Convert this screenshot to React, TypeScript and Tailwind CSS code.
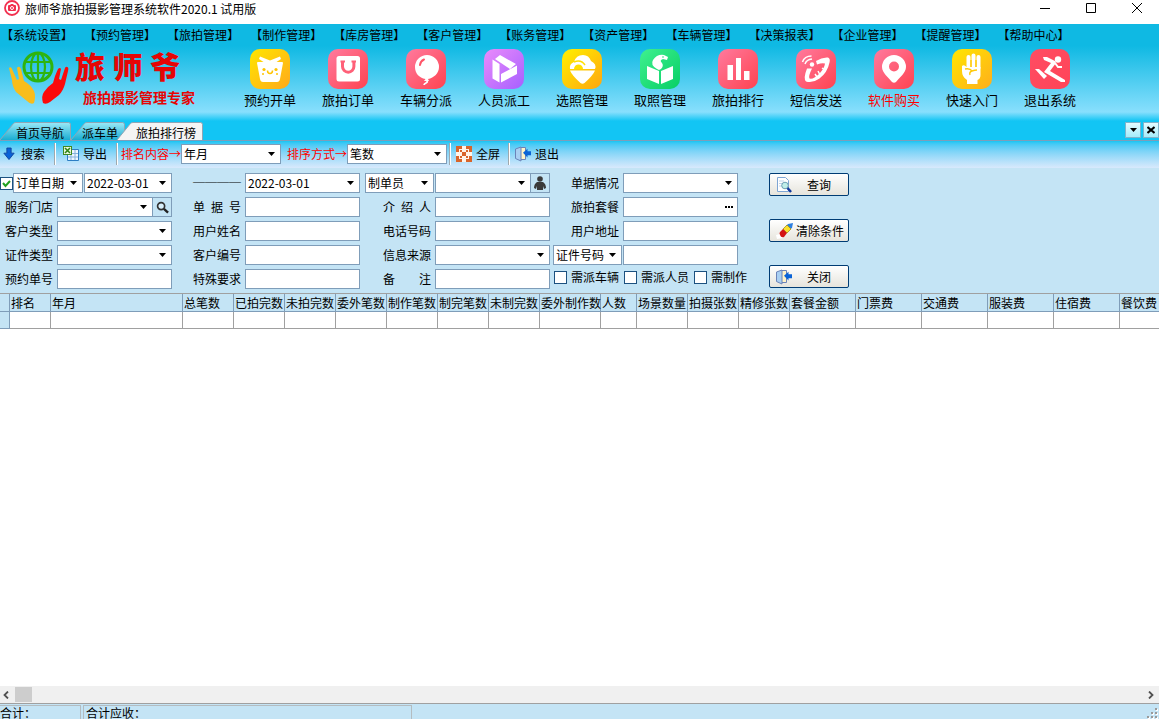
import type { ReactNode } from 'react'

const menus = [
  '系统设置', '预约管理', '旅拍管理', '制作管理', '库房管理', '客户管理', '账务管理',
  '资产管理', '车辆管理', '决策报表', '企业管理', '提醒管理', '帮助中心',
]

type Shortcut = { label: string; from: string; to: string; red?: boolean; art: ReactNode }

const shortcuts: Shortcut[] = [
  {
    label: '预约开单', from: '#ffe600', to: '#ffa91c',
    art: (
      <>
        <path d="M7 14q0-1 1-1h24q1 0 1 1l-3 16q-.5 3-3 3H13q-2.500 0-3-3z" />
        <path d="M10 7.500l10 4 10-4 1 2.500-6 4H15l-6-4z" />
        <g fill="#ffc400">
          <circle cx="14" cy="20.500" r="1.600" />
          <circle cx="26" cy="20.500" r="1.600" />
          <circle cx="13" cy="25" r="1" />
          <circle cx="27" cy="25" r="1" />
        </g>
        <path d="M17.500 21.500q0 3 2.500 3t2.500-3" fill="none" stroke="#ffc400" strokeWidth="1.500" />
      </>
    ),
  },
  {
    label: '旅拍订单', from: '#ff7a9e', to: '#ff4350',
    art: (
      <>
        <rect x="8.500" y="7" width="23.500" height="25.500" rx="2.500" />
        <path d="M14.500 12v5.500a5.700 5.700 0 0 0 11.400 0V12" fill="none" stroke="#ff6078" strokeWidth="3" />
        <path d="M12.500 12.500h4.500M23.500 12.500H28" stroke="#ff6078" strokeWidth="2" />
      </>
    ),
  },
  {
    label: '车辆分派', from: '#ff7a9e', to: '#ff4350',
    art: (
      <>
        <path d="M21 6a12 12 0 0 1 12 12c0 6-5 11-11 12l1 2h-5l1.500-2C13 29 9 24 9 18A12 12 0 0 1 21 6z" />
        <path d="M21 31q1 2-1 3t-2 2" fill="none" stroke="#fff" strokeWidth="1.600" />
        <path d="M14 16q.5-4 4-5.500" fill="none" stroke="#ff5568" strokeWidth="2" strokeLinecap="round" />
      </>
    ),
  },
  {
    label: '人员派工', from: '#ea8bfb', to: '#a660ff',
    art: <path d="M16 6l16 9-6 5L11 10zM8.500 10.500l7 4.500v18.500l-7-4zM17 25l16-8.500V25l-16 8.500z" />,
  },
  {
    label: '选照管理', from: '#fff000', to: '#ffa60f',
    art: (
      <>
        <path d="M8 20q-1-5 4-7 2-7 9-7 6 0 8 6 6 3 4 8z" />
        <path d="M8 21.500h25q-2 5-10.500 12.500-2 1.500-4 0Q10 26.500 8 21.500z" />
        <path d="M12 20a4.500 4.500 0 0 1 9 0z" fill="#ffdf00" />
        <path d="M12 13q7-3 11 3" fill="none" stroke="#ffdf00" strokeWidth="1.500" />
      </>
    ),
  },
  {
    label: '取照管理', from: '#3ff08f', to: '#08cf66',
    art: (
      <>
        <path d="M7 17l12 5v13L7 30zM33 17l-12 5v13l12-5z" />
        <path d="M17 20q-7-4-4-9 4-6 11-5l4 2-1 3-4-1q-4 1-1 4 2 3-1 6l-2 1z" />
        <circle cx="23" cy="8" r=".8" fill="#1edb78" />
      </>
    ),
  },
  {
    label: '旅拍排行', from: '#ff7a9e', to: '#ff4350',
    art: <path d="M9.500 16H15v15H9.500zM18 9h5v22h-5zM26 22h5.500v9H26z" />,
  },
  {
    label: '短信发送', from: '#ff7a9e', to: '#ff4350',
    art: (
      <>
        <path d="M6.500 13q2-6 9-6M9 15q1.500-4.500 7-5" fill="none" stroke="#fff" strokeWidth="1.500" />
        <circle cx="16" cy="15.500" r="2.200" />
        <path d="M20 12q6-4 12-3.500 2.500 1 1.500 5-2 10-10 16-7 5-13.500 3-3-3 1-13l5 0q-4 8-2.500 10 4 1 9-4 6-6 6.500-11-3-1-8 1z" />
        <path d="M22 22l2 4M26 19l3 2M19 25l2 3" stroke="#fff" strokeWidth="1.500" />
      </>
    ),
  },
  {
    label: '软件购买', from: '#ff7a9e', to: '#ff4350', red: true,
    art: (
      <path
        fillRule="evenodd"
        d="M20 6a12 12 0 0 1 12 12c0 6-7 11-10 15q-2 1.500-4 0C15 29 8 24 8 18A12 12 0 0 1 20 6zm0 6.500a5 5 0 1 0 0 10 5 5 0 0 0 0-10z"
      />
    ),
  },
  {
    label: '快速入门', from: '#ffe600', to: '#ffae1c',
    art: (
      <>
        <path d="M16.500 19V8M21.500 18V6.500M26.500 19V8" stroke="#fff" strokeWidth="4" strokeLinecap="round" />
        <path d="M10 17q2-2 4.500 1h14v8q0 4-3 5v4H15v-4q-5-3-5-9z" />
        <path d="M13 20q5-1 7 2 3-1 5-1M20 22q-3 1-2 4M19 11v7M24 11v7" fill="none" stroke="#ffca0a" strokeWidth="1.400" />
      </>
    ),
  },
  {
    label: '退出系统', from: '#ff4d63', to: '#ff4458',
    art: (
      <>
        <circle cx="28" cy="10.500" r="3.200" />
        <path d="M13 8h4l8 4 1 2-6 8 15 9v2h-4L14 23l7-9-7-3z" />
        <path d="M25 14l3 4h4" fill="none" stroke="#fff" strokeWidth="2" />
        <path d="M5 20h4l8 7-3 3z" />
      </>
    ),
  },
]

const columns: [string, number][] = [
  ['排名', 41], ['年月', 132], ['总笔数', 51], ['已拍完数', 51], ['未拍完数', 51], ['委外笔数', 51],
  ['制作笔数', 51], ['制完笔数', 51], ['未制完数', 51], ['委外制作数', 61], ['人数', 36],
  ['场景数量', 51], ['拍摄张数', 51], ['精修张数', 51], ['套餐金额', 66], ['门票费', 66],
  ['交通费', 66], ['服装费', 66], ['住宿费', 66], ['餐饮费', 66],
]

function AppTile({ from, to, id, children }: { from: string; to: string; id: string; children: ReactNode }) {
  return (
    <svg viewBox="0 0 40 40" className="size-10" fill="#fff" aria-hidden="true">
      <defs>
        <linearGradient id={id} x1="0" y1="0" x2="1" y2="1">
          <stop offset="0" stopColor={from} />
          <stop offset="1" stopColor={to} />
        </linearGradient>
      </defs>
      <rect width="40" height="40" rx="10" fill={`url(#${id})`} />
      {children}
    </svg>
  )
}

function Logo() {
  return (
    <svg viewBox="0 0 60 56" className="h-14 w-[60px] shrink-0" fill="none" aria-hidden="true">
      <g stroke="#2fb40f" strokeWidth="2.200">
        <circle cx="29" cy="18" r="14" strokeWidth="3" />
        <ellipse cx="29" cy="18" rx="7" ry="14" />
        <path d="M29 4v28M16 13h26M16 24h26" />
      </g>
      <path
        d="M0 19Q2 17 3 20L8 31L10 30L8 19Q10 16 12 20L15 32Q22 36 25 42Q27 47 25 54Q22 56 18 52L7 43Q3 37 3 31Z"
        fill="#f8bd1c"
      />
      <path
        d="M58 18Q60 18 59 22L56 35Q54 42 50 46L41 53Q37 56 34 54Q32 47 35 43Q38 38 44 34Q46 26 49 20Q51 18 52 20L50 30L52 31L56 19Q57 17 58 18Z"
        fill="#fb0a0a"
      />
    </svg>
  )
}

function DownArrow() {
  return (
    <svg viewBox="0 0 14 16" className="h-4 w-3" aria-hidden="true">
      <path d="M4.500 1h5v6H13l-6 7.500L1 7h3.500z" fill="#0a62d8" stroke="#0b3f99" />
    </svg>
  )
}

function ExportIcon() {
  return (
    <svg viewBox="0 0 16 16" className="size-4" aria-hidden="true">
      <path d="M4.500 3.500h11v11h-11z" fill="#eef6ff" stroke="#2d7dc4" />
      <path d="M8 4v10M12 4v10M5 7.500h10M5 11h10" stroke="#86b3dc" />
      <rect x=".5" y=".5" width="8" height="8" fill="#e9f7dc" stroke="#3f8a21" />
      <path d="M2 2l5 5M7 2L2 7" stroke="#2f8415" strokeWidth="1.600" />
    </svg>
  )
}

function FullscreenIcon() {
  return (
    <svg viewBox="0 0 16 16" className="size-4" aria-hidden="true">
      <rect width="16" height="16" rx="1" fill="#fff4ea" />
      <path
        d="M0 0h6v3H3v3H0zM10 0h6v6h-3V3h-3zM0 10h3v3h3v3H0zM13 10h3v6h-6v-3h3zM6 6h4v4H6zM4 4h2v2H4zM10 4h2v2h-2zM4 10h2v2H4zM10 10h2v2h-2z"
        fill="#d9642a"
      />
    </svg>
  )
}

function DoorIcon() {
  return (
    <svg viewBox="0 0 16 16" className="size-4 shrink-0" aria-hidden="true">
      <path d="M4.500 1.500h6v12h-6z" fill="#fff3c9" stroke="#6b83b8" />
      <path d="M.5 3L6 1v14L.5 12.500z" fill="#a9cff2" stroke="#6b83b8" />
      <path d="M8 6.800l4.500-4v2.400H16v4h-3.500v2.400z" fill="#0a63d6" />
    </svg>
  )
}

function QueryIcon() {
  return (
    <svg viewBox="0 0 16 16" className="size-4 shrink-0" aria-hidden="true">
      <path d="M1.500.5h8l3 3v11h-11z" fill="#fff" stroke="#7fa6d4" />
      <path d="M3 4h5M3 6.500h4M3 9h3" stroke="#c0d4ea" />
      <circle cx="9" cy="8.500" r="3.300" fill="#bfeee8" stroke="#6d9fb4" />
      <path d="M11.500 11l3.500 4" stroke="#123a9c" strokeWidth="2.500" />
    </svg>
  )
}

function EraserIcon() {
  return (
    <svg viewBox="0 0 18 16" className="h-4 w-[18px] shrink-0" aria-hidden="true">
      <path d="M0 12l4-1 3 4-6 1z" fill="#fff" />
      <path d="M12 1l5-1-1 5-3 2-3-4z" fill="#2e7fe0" />
      <path d="M11 2l4 4-4 4-4-4z" fill="#fbe02c" stroke="#9a8510" strokeWidth=".7" />
      <path d="M7 6l4 4-3 4q-3 1-4-2-1-2 0-3z" fill="#d31313" />
    </svg>
  )
}

function Triangle() {
  return (
    <svg viewBox="0 0 7 4" className="pointer-events-none absolute top-2 right-1.5 h-1 w-[7px]" aria-hidden="true">
      <path d="M0 0h7L3.500 4z" />
    </svg>
  )
}

// drop-down with the flat border used all over the form
function Combo({ id, label, value = '', className }: { id: string; label?: string; value?: string; className: string }) {
  return (
    <span className={`relative block h-5 shrink-0 ${className}`}>
      <select
        id={id}
        aria-label={label}
        className="block h-5 w-full appearance-none border border-[#7f9db9] bg-white px-0.5 text-xs leading-4"
      >
        <option>{value}</option>
      </select>
      <Triangle />
    </span>
  )
}

function TextField({ id, label }: { id: string; label?: string }) {
  return (
    <input
      id={id}
      aria-label={label}
      type="text"
      className="block h-5 w-[115px] shrink-0 border border-[#7f9db9] bg-white px-1"
    />
  )
}

function Row({ htmlFor, text, children }: { htmlFor: string; text: string; children: ReactNode }) {
  return (
    <div className="flex h-5 items-center justify-end">
      <label htmlFor={htmlFor} className="pr-1 whitespace-pre">{text}</label>
      {children}
    </div>
  )
}

function Check({ id, text }: { id: string; text: string }) {
  return (
    <label htmlFor={id} className="flex items-center gap-1 whitespace-nowrap">
      <input id={id} type="checkbox" className="size-[13px] appearance-none border border-[#1c5180] bg-white" />
      {text}
    </label>
  )
}

function Separator() {
  return <span className="h-[22px] w-0.5 border-l border-[#9fa9ae] bg-white" />
}

function FormButton({ icon, text }: { icon: ReactNode; text: string }) {
  return (
    <button
      type="button"
      className="flex h-[23px] w-20 items-center rounded-xs border border-[#003c74] bg-linear-to-b from-white to-[#e6e4dc] pl-1.5 pr-0.5 whitespace-nowrap"
    >
      {icon}
      <span className="flex-1 text-center">{text}</span>
    </button>
  )
}

function Tab({ text, active, className, width }: { text: string; active?: boolean; className: string; width: number }) {
  const fill = active ? '#f4f4f4' : 'url(#tab-fill)'
  return (
    <button type="button" role="tab" aria-selected={!!active} className={`relative h-[18px] ${className}`}>
      <svg className="absolute inset-0 size-full" viewBox={`0 0 ${width} 18`} aria-hidden="true">
        <defs>
          <linearGradient id="tab-fill" x1="0" y1="0" x2="0" y2="1">
            <stop offset="0" stopColor="#9be9f7" />
            <stop offset="1" stopColor="#19add2" />
          </linearGradient>
        </defs>
        <path d={`M0 18L13.500 1.500Q14.500.5 16 .5H${width - 2.5}q2 0 2 2V18`} fill={fill} stroke="#8fa5b5" />
      </svg>
      <span className="relative block pt-[3px] pr-[7px] text-right leading-[15px]">{text}</span>
    </button>
  )
}

function Header() {
  return (
    <header className="bg-[linear-gradient(to_bottom,#0fb9e3_22px,#88dffd_88px,#12c5f4_97px)]">
      <nav className="flex h-[22px] items-center gap-[11px] overflow-hidden pl-px whitespace-nowrap">
        {menus.map((m) => (
          <a key={m} href="#">【{m}】</a>
        ))}
      </nav>
      <div className="flex h-[76px] items-start pt-[3px]">
        <div className="flex w-[231px] shrink-0 gap-1.5 pl-[9px] text-[#e60505]">
          <Logo />
          <div className="whitespace-nowrap">
            <p className="text-[30px] leading-8 font-black">{'旅\u2005师\u2005爷'}</p>
            <p className="pt-1.5 pl-2 text-sm leading-5 font-bold">旅拍摄影管理专家</p>
          </div>
        </div>
        {shortcuts.map((s, i) => (
          <button
            key={s.label}
            type="button"
            className={`flex w-[78px] shrink-0 flex-col items-center gap-[3px] text-[13px] leading-4 ${s.red ? 'text-[#ff0000]' : ''}`}
          >
            <AppTile id={`tile-${i}`} from={s.from} to={s.to}>{s.art}</AppTile>
            {s.label}
          </button>
        ))}
      </div>
      <div className="flex h-[19px] items-end border-b border-[#7f9db9]">
        <div role="tablist" className="flex">
          <Tab text="首页导航" width={71} className="w-[71px]" />
          <Tab text="派车单" width={54} className="w-[54px]" />
          <Tab text="旅拍排行榜" width={86} active className="-ml-2 w-[86px]" />
        </div>
        <div className="mb-0.5 ml-auto flex gap-0.5">
          <button type="button" aria-label="标签列表" className="flex size-4 items-center justify-center border border-[#7fb4cc] bg-linear-to-b from-[#e4fbff] to-[#a4ecfa]">
            <svg viewBox="0 0 7 4" className="h-1 w-[7px]"><path d="M0 0h7L3.500 4z" /></svg>
          </button>
          <button type="button" aria-label="关闭标签" className="flex size-4 items-center justify-center border border-[#7fb4cc] bg-linear-to-b from-[#e4fbff] to-[#a4ecfa]">
            <svg viewBox="0 0 8 8" className="size-2"><path d="M.5 1l7 6M7.500 1l-7 6" stroke="#000" strokeWidth="2" /></svg>
          </button>
        </div>
      </div>
    </header>
  )
}

function Toolbar() {
  return (
    <div className="flex h-[27px] items-center overflow-hidden bg-linear-to-b from-[#12c5f4] to-[#d8e9fc] pb-px whitespace-nowrap">
      <button type="button" className="flex w-[54px] items-center gap-1.5 pl-[3px]">
        <DownArrow />
        搜索
      </button>
      <Separator />
      <button type="button" className="flex w-[60px] items-center gap-1 pl-[7px]">
        <ExportIcon />
        导出
      </button>
      <Separator />
      <label htmlFor="rank-content" className="pl-[3px] text-[#ff0000]">排名内容→</label>
      <Combo id="rank-content" value="年月" className="w-[100px]" />
      <label htmlFor="sort-mode" className="pl-1.5 text-[#ff0000]">排序方式→</label>
      <Combo id="sort-mode" value="笔数" className="w-[100px]" />
      <span className="w-0.5" />
      <Separator />
      <button type="button" className="flex w-[57px] items-center gap-1 pl-[5px]">
        <FullscreenIcon />
        全屏
      </button>
      <Separator />
      <button type="button" className="flex items-center gap-1 pl-[5px]">
        <DoorIcon />
        退出
      </button>
    </div>
  )
}

function SearchForm() {
  return (
    <form className="flex overflow-hidden pt-[5px] pb-1">
      <div className="flex w-[172px] shrink-0 flex-col gap-1">
        <div className="flex h-5 items-center">
          <span className="relative block size-[13px] shrink-0">
            <input
              type="checkbox"
              defaultChecked
              aria-label="按日期查询"
              className="peer block size-[13px] appearance-none border border-[#1c5180] bg-white"
            />
            <svg viewBox="0 0 13 13" className="pointer-events-none absolute inset-0 hidden size-[13px] peer-checked:block">
              <path d="M3 6l2.500 3L10 4" fill="none" stroke="#21a121" strokeWidth="2" />
            </svg>
          </span>
          <Combo id="date-kind" label="日期类型" value="订单日期" className="w-[70px]" />
          <Combo id="date-from" label="开始日期" value="2022-03-01" className="ml-auto w-[88px]" />
        </div>
        <Row htmlFor="shop" text="服务门店">
          <Combo id="shop" className="w-24" />
          <button type="button" aria-label="查找门店" className="flex h-5 w-[19px] items-center justify-center border border-l-0 border-[#7f9db9]">
            <svg viewBox="0 0 14 14" className="size-[13px]">
              <circle cx="5.500" cy="5.500" r="3.800" fill="#d9f0fb" stroke="#333" strokeWidth="1.800" />
              <path d="M8.500 8.500l4.500 4" stroke="#222" strokeWidth="2.600" />
            </svg>
          </button>
        </Row>
        <Row htmlFor="customer-kind" text="客户类型"><Combo id="customer-kind" className="w-[115px]" /></Row>
        <Row htmlFor="id-kind" text="证件类型"><Combo id="id-kind" className="w-[115px]" /></Row>
        <Row htmlFor="booking-no" text="预约单号"><TextField id="booking-no" /></Row>
      </div>

      <div className="flex w-[188px] shrink-0 flex-col gap-1">
        <Row htmlFor="date-to" text="────"><Combo id="date-to" value="2022-03-01" className="w-[115px]" /></Row>
        <Row htmlFor="bill-no" text={'单\u2002据\u2002号'}><TextField id="bill-no" /></Row>
        <Row htmlFor="user-name" text="用户姓名"><TextField id="user-name" /></Row>
        <Row htmlFor="customer-no" text="客户编号"><TextField id="customer-no" /></Row>
        <Row htmlFor="special" text="特殊要求"><TextField id="special" /></Row>
      </div>

      <div className="flex w-[190px] shrink-0 flex-col gap-1">
        <div className="flex h-5 items-center justify-end">
          <Combo id="staff-kind" label="人员类型" value="制单员" className="mr-px w-[69px]" />
          <Combo id="staff" label="人员" className="w-24" />
          <button type="button" aria-label="选择人员" className="flex h-5 w-[19px] items-center justify-center border border-l-0 border-[#7f9db9]">
            <svg viewBox="0 0 14 14" className="size-[14px]" fill="#3a3a3a">
              <circle cx="7" cy="3" r="2.800" />
              <path d="M4 6h6q3 2 3 6l-2 1-1-3v4H4v-4l-1 3-2-1q0-4 3-6z" />
            </svg>
          </button>
        </div>
        <Row htmlFor="referrer" text={'介\u2002绍\u2002人'}><TextField id="referrer" /></Row>
        <Row htmlFor="phone" text="电话号码"><TextField id="phone" /></Row>
        <Row htmlFor="source" text="信息来源"><Combo id="source" className="w-[115px]" /></Row>
        <Row htmlFor="remark" text="备　　注"><TextField id="remark" /></Row>
      </div>

      <div className="flex w-[188px] shrink-0 flex-col gap-1">
        <Row htmlFor="bill-state" text="单据情况"><Combo id="bill-state" className="w-[115px]" /></Row>
        <Row htmlFor="package" text="旅拍套餐">
          <span className="relative block">
            <TextField id="package" />
            <button type="button" aria-label="选择套餐" className="absolute top-0 right-1 flex h-5 items-center gap-px px-px">
              <i className="size-0.5 bg-black" />
              <i className="size-0.5 bg-black" />
              <i className="size-0.5 bg-black" />
            </button>
          </span>
        </Row>
        <Row htmlFor="address" text="用户地址"><TextField id="address" /></Row>
        <div className="flex h-5 items-center justify-end">
          <Combo id="id-no-kind" label="号码类型" value="证件号码" className="mr-px w-[69px]" />
          <TextField id="id-no" label="号码" />
        </div>
        <div className="flex h-4 items-center gap-[5px] pl-1">
          <Check id="need-car" text="需派车辆" />
          <Check id="need-staff" text="需派人员" />
          <Check id="need-make" text="需制作" />
        </div>
      </div>

      <div className="ml-[31px] flex flex-col gap-[23px]">
        <FormButton icon={<QueryIcon />} text="查询" />
        <FormButton icon={<EraserIcon />} text="清除条件" />
        <FormButton icon={<DoorIcon />} text="关闭" />
      </div>
    </form>
  )
}

function ResultGrid() {
  return (
    <div className="flex-1 overflow-hidden border-t border-[#a0a0a0] bg-white">
      <table className="w-[1186px] table-fixed border-separate border-spacing-0 whitespace-nowrap">
        <colgroup>
          <col className="w-2.5" />
          {columns.map(([name, width]) => (
            <col key={name} style={{ width }} />
          ))}
        </colgroup>
        <thead>
          <tr className="h-[18px] bg-[#c4e4f5] text-left">
            <th className="border-r border-b border-[#7f9db9] p-0" />
            {columns.map(([name]) => (
              <th key={name} className="border-r border-b border-[#7f9db9] p-0 pl-px leading-4 font-normal">{name}</th>
            ))}
          </tr>
        </thead>
        <tbody>
          <tr className="h-[17px]">
            <td className="border-r border-b border-[#7f9db9] bg-[#c4e4f5] p-0" />
            {columns.map(([name]) => (
              <td key={name} className="border-r border-b border-[#a0a0a0] p-0" />
            ))}
          </tr>
        </tbody>
      </table>
    </div>
  )
}

function Footer() {
  return (
    <footer>
      <div className="flex h-[17px] items-center bg-[#f0f0f0]">
        <button type="button" aria-label="向左滚动" className="flex w-[15px] pl-[3px]">
          <svg viewBox="0 0 6 8" className="h-2 w-1.5"><path d="M5 .5L1.500 4 5 7.500" fill="none" stroke="#505050" strokeWidth="1.800" /></svg>
        </button>
        <span className="h-[15px] w-[17px] bg-[#cdcdcd]" />
        <button type="button" aria-label="向右滚动" className="ml-auto flex w-[17px] justify-center">
          <svg viewBox="0 0 6 8" className="h-2 w-1.5"><path d="M1 .5L4.500 4 1 7.500" fill="none" stroke="#505050" strokeWidth="1.800" /></svg>
        </button>
      </div>
      <div className="flex h-4 items-end gap-0.5 border-t border-[#a0a0a0] leading-[14px]">
        <span className="h-[14px] w-[81px] border-t border-r border-[#b4bcc0]">合计：</span>
        <span className="h-[14px] w-[329px] border-x border-t border-[#b4bcc0] pl-0.5">合计应收：</span>
        <svg viewBox="0 0 12 12" className="ml-auto size-3" fill="#9a9a9a" aria-hidden="true">
          <path d="M8 1h2v2H8zM8 5h2v2H8zM4 5h2v2H4zM8 9h2v2H8zM4 9h2v2H4zM0 9h2v2H0z" />
          <path d="M10 2h1v2H9V3h1zM10 6h1v2H9V7h1zM6 6h1v2H5V7h1zM10 10h1v2H9v-1h1zM6 10h1v2H5v-1h1zM2 10h1v2H1v-1h1z" fill="#fff" />
        </svg>
      </div>
    </footer>
  )
}

export default function App() {
  return (
    <div className="flex h-screen flex-col overflow-hidden bg-[#c4e4f5] font-['Noto_Sans_CJK_SC',sans-serif] text-xs leading-4 text-black">
      <div className="flex h-6 items-start bg-white">
        <svg viewBox="0 0 16 16" className="ml-1 size-4" aria-hidden="true">
          <circle cx="8" cy="8" r="7" fill="#fff" stroke="#f2304f" strokeWidth="1.800" />
          <rect x="4" y="5" width="8" height="6" rx="1" fill="#f2304f" />
          <path d="M6.500 4h3v2h-3z" fill="#f2304f" />
          <circle cx="8" cy="8" r="1.500" fill="#f2304f" stroke="#fff" />
        </svg>
        <h1 className="pl-[5px] leading-[18px]">旅师爷旅拍摄影管理系统软件2020.1 试用版</h1>
        <div className="ml-auto flex h-4 items-center gap-9 pr-[17px]">
          <button type="button" aria-label="最小化">
            <svg viewBox="0 0 10 10" className="size-2.5"><path d="M0 5.500h10" stroke="#000" /></svg>
          </button>
          <button type="button" aria-label="最大化">
            <svg viewBox="0 0 10 10" className="size-2.5"><path d="M.5.5h9v9h-9z" fill="none" stroke="#000" /></svg>
          </button>
          <button type="button" aria-label="关闭窗口">
            <svg viewBox="0 0 10 10" className="size-2.5"><path d="M0 0l10 10M10 0L0 10" stroke="#000" /></svg>
          </button>
        </div>
      </div>
      <Header />
      <Toolbar />
      <SearchForm />
      <ResultGrid />
      <Footer />
    </div>
  )
}
